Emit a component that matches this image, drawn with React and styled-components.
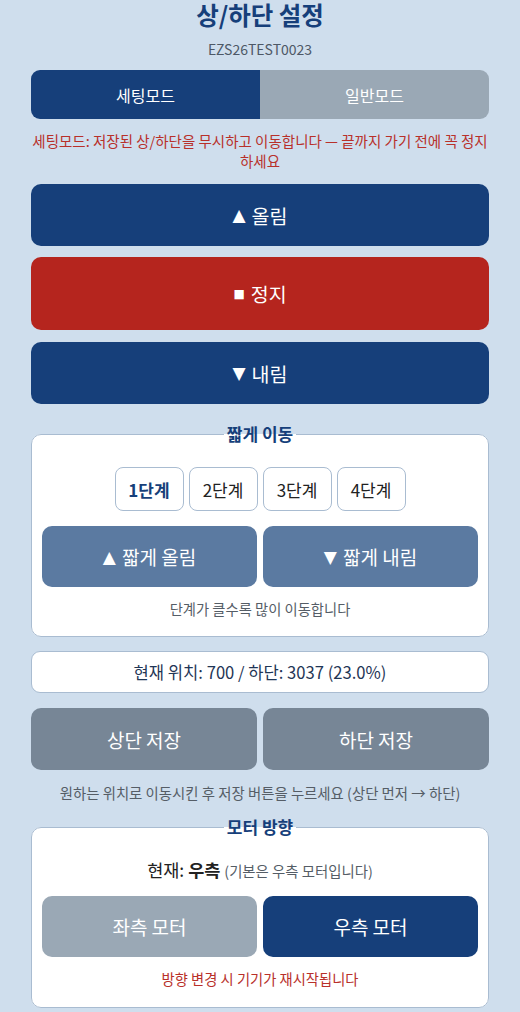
import React from "react";
import styled, { createGlobalStyle } from "styled-components";

const Global = createGlobalStyle`
  html, body { margin: 0; padding: 0; background: #cfdeed; }
  body { font-family: "Noto Sans CJK KR", "Noto Sans", sans-serif; }
  * { box-sizing: border-box; }
`;

const Page = styled.div`
  width: 458px;
  margin: 0 auto;
  display: flex;
  flex-direction: column;
  align-items: stretch;
`;

const Title = styled.h1`
  margin: 0;
  padding-top: 2px;
  font-size: 24.5px;
  line-height: 26px;
  font-weight: 700;
  color: #163f7a;
  text-align: center;
`;

const Serial = styled.div`
  margin-top: 11px;
  font-size: 14px;
  line-height: 20px;
  color: #4d5866;
  text-align: center;
`;

const Toggle = styled.div`
  margin-top: 11px;
  display: flex;
  height: 49px;
  border-radius: 9px;
  overflow: hidden;
`;

const ToggleBtn = styled.button`
  flex: 1;
  border: none;
  font-family: inherit;
  font-size: 16px;
  color: #fff;
  background: ${(p) => (p.$active ? "#163f7a" : "#9aa8b5")};
`;

const Warning = styled.p`
  margin: 12px 0 0;
  font-size: 14.5px;
  line-height: 20px;
  color: #b8302a;
  text-align: center;
`;

const BigBtn = styled.button`
  margin-top: ${(p) => p.$mt || 12}px;
  height: ${(p) => p.$h || 62}px;
  border: none;
  border-radius: 10px;
  background: ${(p) => p.$bg};
  color: #fff;
  font-family: inherit;
  font-size: 19.5px;
  display: flex;
  align-items: center;
  justify-content: center;
  gap: 6px;
`;

const Glyph = styled.span`
  font-family: "DejaVu Sans", sans-serif;
  font-size: ${(p) => p.$size || 17}px;
`;

const Box = styled.fieldset`
  margin: ${(p) => p.$mt}px 0 0;
  border: 1px solid #a9bcd1;
  border-radius: 10px;
  background: #fff;
  padding: ${(p) => p.$pad};
  min-width: 0;
`;

const Legend = styled.legend`
  margin: 0 auto;
  padding: 0 3px;
  font-size: 17px;
  line-height: 22px;
  font-weight: 700;
  color: #163f7a;
`;

const Steps = styled.div`
  display: flex;
  justify-content: center;
  gap: 5px;
`;

const StepBtn = styled.button`
  width: 69px;
  height: 44px;
  border: 1px solid #a9bcd1;
  border-radius: 8px;
  background: #fff;
  font-family: inherit;
  font-size: 17px;
  font-weight: ${(p) => (p.$active ? 700 : 400)};
  color: ${(p) => (p.$active ? "#163f7a" : "#222")};
`;

const Pair = styled.div`
  margin-top: ${(p) => p.$mt || 0}px;
  display: grid;
  grid-template-columns: 1fr 1fr;
  gap: 6px;
`;

const PairBtn = styled.button`
  height: ${(p) => p.$h || 61}px;
  border: none;
  border-radius: 10px;
  background: ${(p) => p.$bg};
  color: #fff;
  font-family: inherit;
  font-size: 19px;
  display: flex;
  align-items: center;
  justify-content: center;
  gap: 6px;
`;

const Hint = styled.p`
  margin: ${(p) => p.$mt || 0}px 0 0;
  font-size: ${(p) => p.$size || 14.3}px;
  line-height: 20px;
  color: ${(p) => p.$color || "#555d66"};
  text-align: center;
`;

const Position = styled.div`
  margin-top: 14px;
  height: 42px;
  border: 1px solid #a9bcd1;
  border-radius: 9px;
  background: #fff;
  display: flex;
  align-items: center;
  justify-content: center;
  font-size: 16.6px;
  color: #1f3656;
`;

const Current = styled.p`
  margin: 0;
  text-align: center;
  font-size: 17.5px;
  line-height: 22px;
  color: #222;
`;

const Strong = styled.b`
  font-weight: 700;
`;

const Small = styled.span`
  font-size: 14.4px;
  color: #555d66;
`;

export default function App() {
  return (
    <>
      <Global />
      <Page>
        <Title>상/하단 설정</Title>
        <Serial>EZS26TEST0023</Serial>
        <Toggle>
          <ToggleBtn $active>세팅모드</ToggleBtn>
          <ToggleBtn>일반모드</ToggleBtn>
        </Toggle>
        <Warning>
          세팅모드: 저장된 상/하단을 무시하고 이동합니다 — 끝까지 가기 전에 꼭 정지하세요
        </Warning>
        <BigBtn $bg="#163f7a" $mt={13} $h={62}>
          <Glyph>▲</Glyph>올림
        </BigBtn>
        <BigBtn $bg="#b5251e" $mt={11} $h={73}>
          <Glyph $size={12}>■</Glyph>정지
        </BigBtn>
        <BigBtn $bg="#163f7a" $mt={12} $h={62}>
          <Glyph>▼</Glyph>내림
        </BigBtn>

        <Box $mt={19} $pad="22px 10px 17px">
          <Legend>짧게 이동</Legend>
          <Steps>
            <StepBtn $active>1단계</StepBtn>
            <StepBtn>2단계</StepBtn>
            <StepBtn>3단계</StepBtn>
            <StepBtn>4단계</StepBtn>
          </Steps>
          <Pair $mt={15}>
            <PairBtn $bg="#5b7aa1">
              <Glyph>▲</Glyph>짧게 올림
            </PairBtn>
            <PairBtn $bg="#5b7aa1">
              <Glyph>▼</Glyph>짧게 내림
            </PairBtn>
          </Pair>
          <Hint $mt={12}>단계가 클수록 많이 이동합니다</Hint>
        </Box>

        <Position>현재 위치: 700 / 하단: 3037 (23.0%)</Position>

        <Pair $mt={15}>
          <PairBtn $bg="#778696" $h={62}>상단 저장</PairBtn>
          <PairBtn $bg="#778696" $h={62}>하단 저장</PairBtn>
        </Pair>
        <Hint $mt={13} $size={14.4}>
          원하는 위치로 이동시킨 후 저장 버튼을 누르세요 (상단 먼저 → 하단)
        </Hint>

        <Box $mt={13} $pad="21px 10px 18px">
          <Legend>모터 방향</Legend>
          <Current>
            현재: <Strong>우측</Strong> <Small>(기본은 우측 모터입니다)</Small>
          </Current>
          <Pair $mt={14}>
            <PairBtn $bg="#9aa8b5">좌측 모터</PairBtn>
            <PairBtn $bg="#163f7a">우측 모터</PairBtn>
          </Pair>
          <Hint $mt={12} $color="#b8302a">방향 변경 시 기기가 재시작됩니다</Hint>
        </Box>
      </Page>
    </>
  );
}
